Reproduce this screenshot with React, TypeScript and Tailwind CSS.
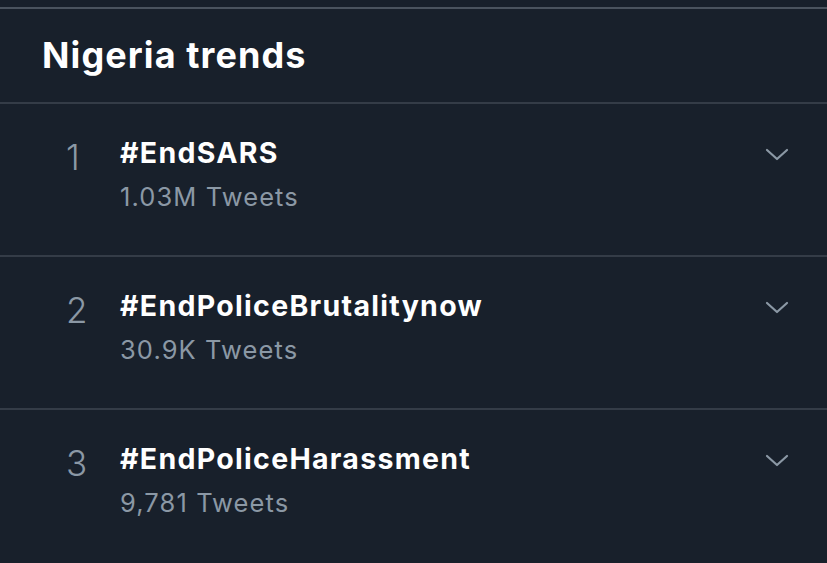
import React from "react";

const trends = [
  { n: "1", tag: "#EndSARS", count: "1.03M Tweets" },
  { n: "2", tag: "#EndPoliceBrutalitynow", count: "30.9K Tweets" },
  { n: "3", tag: "#EndPoliceHarassment", count: "9,781 Tweets" },
];

function Chevron() {
  return (
    <svg width="24" height="14" viewBox="0 0 24 14" fill="none">
      <path d="M2 2 L12 11 L22 2" stroke="#8b98a5" strokeWidth="2.2" strokeLinecap="round" strokeLinejoin="round" />
    </svg>
  );
}

export default function App() {
  return (
    <div className="w-[827px] h-[563px] bg-[#18202b] overflow-hidden" style={{ fontFamily: "Inter, 'Noto Sans', sans-serif" }}>
      <div className="h-[7px]" />
      <div className="border-t-2 border-[#4a535e] h-[95px] pl-[42px] pt-[26px]">
        <h1 className="text-[36px] leading-[40px] font-bold text-white tracking-[1.1px]">Nigeria trends</h1>
      </div>
      {trends.map((t) => (
        <div key={t.n} className="border-t-2 border-[#343c47] h-[153px] flex pl-[66px] pr-[38px] pt-[33px]">
          <div className="w-[54px] text-[35px] font-light text-[#8b98a5] leading-none pt-[3px]">{t.n}</div>
          <div className="flex-1 flex flex-col">
            <div className="text-[28.5px] font-bold text-white leading-[32px] tracking-[1.3px]">{t.tag}</div>
            <div className="text-[25.5px] text-[#8b98a5] leading-[32px] mt-[12px] tracking-[1.1px]">{t.count}</div>
          </div>
          <div className="pt-[11px]"><Chevron /></div>
        </div>
      ))}
    </div>
  );
}
